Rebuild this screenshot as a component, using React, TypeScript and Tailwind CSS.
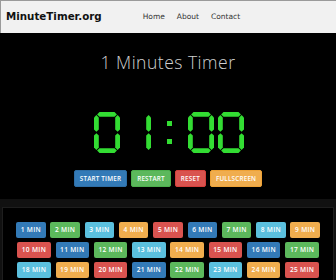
import React from "react";

const H = 2.4;
const W = 26;
const DH = 41;
const G = 0.7;

function hseg(x0: number, x1: number, y: number) {
  return `${x0},${y} ${x0 + H},${y - H} ${x1 - H},${y - H} ${x1},${y} ${x1 - H},${y + H} ${x0 + H},${y + H}`;
}
function vseg(x: number, y0: number, y1: number) {
  return `${x},${y0} ${x + H},${y0 + H} ${x + H},${y1 - H} ${x},${y1} ${x - H},${y1 - H} ${x - H},${y0 + H}`;
}

const SEGS: Record<string, string[]> = {
  "0": ["a", "b", "c", "d", "e", "f"],
  "1": ["b", "c"],
};

function Digit({ ox, d }: { ox: number; d: string }) {
  const mid = DH / 2;
  const L = ox + H;
  const R = ox + W - H;
  const pts: Record<string, string> = {
    a: hseg(L + G, R - G, H),
    d: hseg(L + G, R - G, DH - H),
    g: hseg(L + G, R - G, mid),
    f: vseg(L, H + G, mid - G),
    b: vseg(R, H + G, mid - G),
    e: vseg(L, mid + G, DH - H - G),
    c: vseg(R, mid + G, DH - H - G),
  };
  return (
    <g>
      {SEGS[d].map((s) => (
        <polygon key={s} points={pts[s]} fill="#33dd33" />
      ))}
    </g>
  );
}

const colors = ["bg-[#337ab7]", "bg-[#5cb85c]", "bg-[#5bc0de]", "bg-[#f0ad4e]", "bg-[#d9534f]"];

export default function App() {
  const mins = Array.from({ length: 25 }, (_, i) => i + 1);
  return (
    <div className="w-[336px] h-[280px] overflow-hidden bg-black" style={{ fontFamily: "'Open Sans', sans-serif" }}>
      <div className="h-[33px] bg-[#f1f1f1] border-t border-l border-[#9a9a9a] flex items-center">
        <div
          className="ml-[5px] text-[10.3px] font-bold text-[#111]"
          style={{ fontFamily: "'DejaVu Sans', sans-serif" }}
        >
          MinuteTimer.org
        </div>
        <div
          className="ml-[41px] flex gap-[12px] text-[7.5px] text-[#333]"
          style={{ fontFamily: "'DejaVu Sans', sans-serif" }}
        >
          <span>Home</span>
          <span>About</span>
          <span>Contact</span>
        </div>
      </div>
      <div className="mt-[17px] text-center text-[17.5px] leading-[24px] font-light tracking-[0.5px] text-[#d0d0d0]">
        1 Minutes Timer
      </div>
      <div className="mt-[38px] flex justify-center">
        <svg width="150" height="41" viewBox="0 0 150 41" className="block ml-[1px]">
          <Digit ox={0} d="0" />
          <Digit ox={31} d="1" />
          <rect x="73" y="9" width="5" height="5" fill="#33dd33" />
          <rect x="73" y="27" width="5" height="5" fill="#33dd33" />
          <Digit ox={94} d="0" />
          <Digit ox={124} d="0" />
        </svg>
      </div>
      <div className="mt-[17px] flex justify-center gap-[4px] text-[6.3px] font-semibold tracking-[0.2px] text-white">
        <div className="h-[17px] px-[5px] flex items-center rounded-[2px] bg-[#337ab7] border border-[#2e6da4]">START TIMER</div>
        <div className="h-[17px] px-[5px] flex items-center rounded-[2px] bg-[#5cb85c] border border-[#4cae4c]">RESTART</div>
        <div className="h-[17px] px-[5px] flex items-center rounded-[2px] bg-[#d9534f] border border-[#d43f3a]">RESET</div>
        <div className="h-[17px] px-[5px] flex items-center rounded-[2px] bg-[#f0ad4e] border border-[#eea236]">FULLSCREEN</div>
      </div>
      <div className="mt-[12px] bg-[#111] px-[2px] pt-[8px] h-[200px]">
        <div className="bg-black border border-[#1e1e1e] pt-[14px] px-[8px] h-[200px]">
          <div className="flex flex-wrap justify-center gap-x-[4.8px] gap-y-[4px] text-[6.6px] font-semibold tracking-[0.3px] text-white">
            {mins.map((m) => (
              <div
                key={m}
                className={`h-[16px] flex items-center justify-center rounded-[2px] ${m < 10 ? "w-[29.5px]" : "w-[33.5px]"} ${colors[(m - 1) % 5]}`}
              >
                {m} MIN
              </div>
            ))}
          </div>
        </div>
      </div>
    </div>
  );
}
